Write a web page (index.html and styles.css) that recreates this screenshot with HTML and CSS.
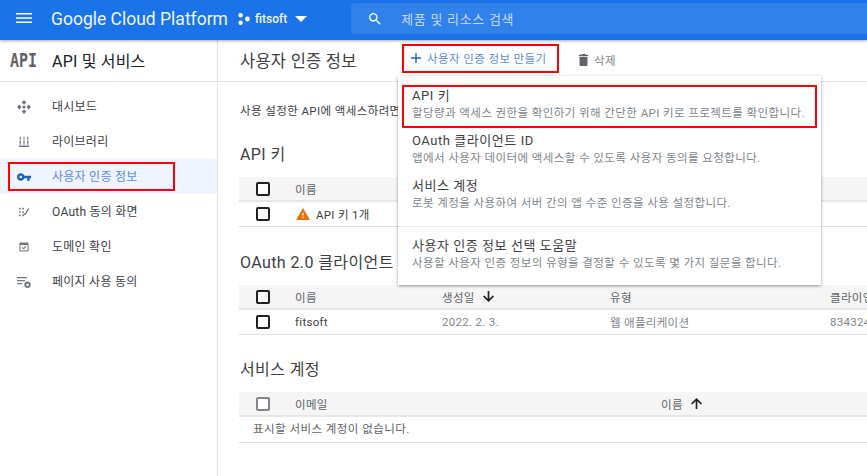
FILE: index.html
```html
<!DOCTYPE html>
<html lang="ko">
<head>
<meta charset="utf-8">
<title>사용자 인증 정보</title>
<link rel="stylesheet" href="styles.css">
</head>
<body>
<header class="topbar">
  <svg class="menu-icon" viewBox="0 0 16 10"><path d="M0 0h16v1.6H0zM0 4.2h16v1.6H0zM0 8.4h16V10H0z"/></svg>
  <span class="brand">Google Cloud Platform</span>
  <div class="project">
    <svg class="project-dots" viewBox="0 0 12 12"><circle cx="2.6" cy="2.2" r="2.2"/><circle cx="2.6" cy="9.8" r="2.2"/><circle cx="9.4" cy="6" r="2.4"/></svg>
    <span class="project-name">fitsoft</span>
    <svg class="caret" viewBox="0 0 12 6"><path d="M0 0h12L6 6z"/></svg>
  </div>
  <div class="search">
    <svg class="search-icon" viewBox="3 3 18 18"><path d="M15.5 14h-.79l-.28-.27A6.471 6.471 0 0 0 16 9.5 6.5 6.5 0 1 0 9.5 16c1.61 0 3.09-.59 4.23-1.57l.27.28v.79l5 4.99L20.49 19l-4.99-5zm-6 0C7.01 14 5 11.99 5 9.5S7.01 5 9.5 5 14 7.01 14 9.5 11.99 14 9.5 14z"/></svg>
    <span class="search-text">제품 및 리소스 검색</span>
  </div>
</header>

<div class="shell">
  <nav class="sidenav">
    <div class="side-head">
      <span class="api-logo">API</span>
      <span class="side-title">API 및 서비스</span>
    </div>
    <ul class="side-list">
      <li class="side-item">
        <svg class="side-icon" viewBox="0 0 14 14"><path d="M7 0l2.400 2.400L7 4.400 4.600 2.400zM7 9.600l2.400 2L7 14l-2.400-2.400zM2.400 4.600l2 2.400-2 2.400L0 7zM11.600 4.600L14 7l-2.400 2.400-2-2.400z"/><circle cx="7" cy="7" r="1.600"/></svg>
        <span>대시보드</span>
      </li>
      <li class="side-item">
        <svg class="side-icon" viewBox="-1 -1 16 16"><path d="M2 1h1.400v3H2zM6.300 1h1.400v3H6.300zM10.600 1h1.400v3h-1.400zM2 5h1.400v5H2zM6.300 5h1.400v5H6.300zM10.600 5h1.400v5h-1.400zM1 11h12v1.600H1z"/></svg>
        <span>라이브러리</span>
      </li>
      <li class="side-item is-active">
        <svg class="side-icon" viewBox="1 6 22 12"><path d="M12.65 10C11.83 7.67 9.61 6 7 6c-3.31 0-6 2.69-6 6s2.69 6 6 6c2.61 0 4.83-1.67 5.65-4H17v4h4v-4h2v-4H12.65zM7 14c-1.1 0-2-.9-2-2s.9-2 2-2 2 .9 2 2-.9 2-2 2z"/></svg>
        <span>사용자 인증 정보</span>
        <i class="mark mark-side"></i>
      </li>
      <li class="side-item">
        <svg class="side-icon" viewBox="-3 -3 20 20"><path d="M0 1h2.400v2.400H0zM4.500 1h2.400v2.400H4.500zM0 5.800h2.400v2.400H0zM4.500 5.800h2.400v2.400H4.500zM0 10.600h2.400V13H0zM4.500 10.600h2.400V13H4.500zM8 9.500l5-8 1.500 1-6 9.500-2.500-2 1-1.300z"/></svg>
        <span>OAuth 동의 화면</span>
      </li>
      <li class="side-item">
        <svg class="side-icon" viewBox="-3 -3 20 20"><path fill-rule="evenodd" d="M2 .5h10a1.500 1.500 0 0 1 1.500 1.500v10a1.500 1.500 0 0 1-1.500 1.500H2A1.500 1.500 0 0 1 .5 12V2A1.500 1.500 0 0 1 2 .5zM2 4v8h10V4z"/><path d="M3.800 8l1-1 1.500 1.500 3-3 1 1-4 4z"/></svg>
        <span>도메인 확인</span>
      </li>
      <li class="side-item">
        <svg class="side-icon" viewBox="0 0 14 14"><path d="M0 2h10v1.200H0zM0 5h8v1.200H0zM0 8h5v1.200H0z"/><circle cx="10.500" cy="9.800" r="2.300" fill="none" stroke="currentColor" stroke-width="1.800"/></svg>
        <span>페이지 사용 동의</span>
      </li>
    </ul>
  </nav>

  <main class="content">
    <div class="page-head">
      <h1 class="page-title">사용자 인증 정보</h1>
      <button class="action action-create">
        <svg class="plus" viewBox="0 0 10 10"><path d="M4.300 0h1.400v4.300H10v1.400H5.700V10H4.300V5.700H0V4.300h4.300z"/></svg>
        사용자 인증 정보 만들기
      </button>
      <button class="action action-delete">
        <svg class="trash" viewBox="5 3 14 18"><path d="M6 19c0 1.100.9 2 2 2h8c1.100 0 2-.9 2-2V7H6v12zM19 4h-3.500l-1-1h-5l-1 1H5v2h14V4z"/></svg>
        삭제
      </button>
      <div class="menu">
        <div class="menu-group">
          <div class="menu-item menu-item-marked">
            <div class="menu-name">API 키</div>
            <div class="menu-desc">할당량과 액세스 권한을 확인하기 위해 간단한 API 키로 프로젝트를 확인합니다.</div>
          </div>
          <div class="menu-item">
            <div class="menu-name">OAuth 클라이언트 ID</div>
            <div class="menu-desc">앱에서 사용자 데이터에 액세스할 수 있도록 사용자 동의를 요청합니다.</div>
          </div>
          <div class="menu-item">
            <div class="menu-name">서비스 계정</div>
            <div class="menu-desc">로봇 계정을 사용하여 서버 간의 앱 수준 인증을 사용 설정합니다.</div>
          </div>
        </div>
        <div class="menu-group menu-group-help">
          <div class="menu-item">
            <div class="menu-name">사용자 인증 정보 선택 도움말</div>
            <div class="menu-desc">사용할 사용자 인증 정보의 유형을 결정할 수 있도록 몇 가지 질문을 합니다.</div>
          </div>
        </div>
      </div>
    </div>

    <p class="intro">사용 설정한 API에 액세스하려면</p>

    <section class="block block-keys">
      <h2 class="block-title">API 키</h2>
      <div class="row row-head cols-keys">
        <span class="check"></span><span>이름</span>
      </div>
      <div class="row cols-keys">
        <span class="check"></span>
        <span class="key-name">
          <svg class="warn" viewBox="1 2 22 19"><path d="M1 21h22L12 2 1 21zm12-3h-2v-2h2v2zm0-4h-2v-4h2v4z"/></svg>
          API 키 1개
        </span>
      </div>
    </section>

    <section class="block block-oauth">
      <h2 class="block-title">OAuth 2.0 클라이언트 ID</h2>
      <div class="row row-head cols-oauth">
        <span class="check"></span><span>이름</span>
        <span class="sort">생성일
          <svg class="arrow" viewBox="0 0 12 12"><path d="M5.100 0h1.800v8.500L10.700 4.800 12 6l-6 6-6-6 1.300-1.200 3.800 3.700z"/></svg>
        </span>
        <span>유형</span><span>클라이언트 ID</span>
      </div>
      <div class="row cols-oauth">
        <span class="check"></span><span>fitsoft</span>
        <span class="muted">2022. 2. 3.</span>
        <span class="muted">웹 애플리케이션</span>
        <span class="muted">834324076</span>
      </div>
    </section>

    <section class="block block-service">
      <h2 class="block-title">서비스 계정</h2>
      <div class="row row-head cols-service">
        <span class="check check-dim"></span><span>이메일</span>
        <span class="sort">이름
          <svg class="arrow" viewBox="0 0 12 12"><path d="M5.100 12h1.800V3.500L10.700 7.200 12 6 6 0 0 6l1.300 1.200 3.800-3.700z"/></svg>
        </span>
      </div>
      <div class="row row-empty">표시할 서비스 계정이 없습니다.</div>
    </section>
  </main>
</div>
</body>
</html>
```

FILE: styles.css
```css
* { box-sizing: border-box; }
html, body { height: 100%; }
body {
  margin: 0;
  overflow: hidden;
  background: #fff;
  color: #3c4043;
  font-family: Roboto, "Noto Sans CJK KR", sans-serif;
  font-size: 11px;
}

/* top bar */
.topbar {
  position: relative;
  z-index: 3;
  display: flex;
  align-items: center;
  height: 40px;
  padding-left: 16px;
  background: #1a73e8;
  color: #fff;
  box-shadow: 0 1px 3px rgba(0,0,0,.35);
}
.menu-icon { width: 16px; height: 10px; margin-top: -4px; fill: #fff; }
.brand { margin-left: 19px; font-size: 17.500px; white-space: nowrap; color: #f1f6fe; margin-top: -2px; }
.project { display: flex; align-items: center; margin-left: 10px; margin-top: -2px; }
.project-dots { width: 12px; height: 12px; fill: #fff; }
.project-name { margin-left: 5px; font-size: 12px; font-weight: 500; color: #f1f6fe; }
.caret { width: 12px; height: 6px; margin-left: 8px; fill: #fff; }
.search {
  display: flex;
  align-items: center;
  flex: 1;
  height: 31px;
  margin-left: 44px;
  margin-top: -3px;
  padding-left: 18px;
  border-radius: 4px 0 0 4px;
  background: #3181ea;
}
.search-icon { width: 12px; height: 12px; fill: #fff; }
.search-text { margin-left: 20px; font-size: 13px; letter-spacing: .7px; color: #c5dafa; }

/* frame */
.shell { display: flex; height: 436px; }

/* side */
.sidenav { flex: none; width: 218px; border-right: 1px solid #e0e0e0; }
.side-head {
  display: flex;
  align-items: center;
  height: 42px;
  padding-left: 10px;
  border-bottom: 1px solid #e4e4e4;
}
.api-logo {
  display: inline-block;
  width: 42px;
  font-family: "DejaVu Sans Mono", monospace;
  font-size: 15px;
  font-weight: 700;
  color: #5f6368;
  transform: scaleY(1.3);
  transform-origin: 50% 55%;
}
.side-title { font-size: 16px; letter-spacing: .2px; color: #202124; margin-bottom: 2px; }
.side-list { margin: 0; padding: 7px 0 0; list-style: none; }
.side-item {
  position: relative;
  display: flex;
  align-items: center;
  height: 35px;
  padding-left: 17px;
  font-size: 12px;
  letter-spacing: .25px;
  color: #3c4043;
}
.side-item span { margin-left: 21px; margin-bottom: 3px; }
.side-icon { flex: none; width: 14px; height: 14px; fill: currentColor; color: #70757a; }
.is-active { background: #eef3fd; color: #5a8fe8; }
.is-active .side-icon { color: #1a63c8; height: 8px; }
.mark { position: absolute; border: 2px solid #f00; pointer-events: none; }
.mark-side { left: 8px; top: 3px; width: 167px; height: 29px; }

/* main */
.content { flex: 1; min-width: 0; overflow: hidden; }
.page-head {
  position: relative;
  display: flex;
  align-items: center;
  height: 42px;
  padding-left: 22px;
  border-bottom: 1px solid #e4e4e4;
}
.page-title { width: 162px; margin: 0 0 2px; font-size: 16.500px; letter-spacing: .25px; font-weight: 400; color: #3c4043; white-space: nowrap; }
.action {
  display: flex;
  align-items: center;
  height: 29px;
  padding: 0;
  border: 0;
  background: none;
  font: inherit;
  font-size: 11.500px;
  letter-spacing: .4px;
}
.action-create {
  width: 157px;
  margin-bottom: 5px;
  padding-left: 7px;
  border: 2px solid #f00;
  color: #5d8ed8;
}
.plus { width: 10px; height: 10px; margin-right: 6px; fill: #1a63c8; }
.action-delete { margin-left: 19px; margin-bottom: 2px; color: #80868b; }
.trash { width: 11px; height: 12px; margin-right: 5px; fill: #5f6368; }

/* popup */
.menu {
  position: absolute;
  z-index: 2;
  left: 180px;
  top: 36px;
  width: 423px;
  padding-top: 9px;
  background: #fff;
  box-shadow: 0 1px 3px rgba(0,0,0,.4);
}
.menu-item { height: 45px; padding: 4px 14px 0; }
.menu-item-marked { width: 415px; height: 43px; margin-left: 4px; padding: 0 8px; border: 2px solid #f00; }
.menu-name { margin-bottom: 1px; font-size: 13px; line-height: 18px; letter-spacing: .55px; color: #3c4043; white-space: nowrap; }
.menu-desc { font-size: 11.500px; line-height: 15px; letter-spacing: .42px; color: #80868b; white-space: nowrap; }
.menu-group-help { margin-top: 8px; padding: 6px 0 7px; border-top: 1px solid #ececec; }

/* sections */
.intro { margin: 22px 0 0 22px; font-size: 11.500px; line-height: 14px; letter-spacing: .4px; white-space: nowrap; color: #3c4043; }
.block { margin-left: 21px; }
.block-keys { margin-top: 27px; }
.block-oauth { margin-top: 26px; }
.block-service { margin-top: 25px; }
.block-title { margin: 0 0 12px 1px; font-size: 16px; line-height: 20px; letter-spacing: .4px; font-weight: 400; color: #3c4043; white-space: nowrap; }
.row {
  display: grid;
  align-items: center;
  width: 628px;
  height: 25px;
  border-bottom: 1px solid #e0e0e0;
  white-space: nowrap;
  font-size: 11.500px;
  letter-spacing: .3px;
}
.row-head { background: #f5f5f5; border-bottom: 2px solid #e6e6e6; color: #5f6368; }
.cols-keys { grid-template-columns: 56px 1fr; }
.cols-oauth { grid-template-columns: 56px 147px 168px 220px 1fr; }
.cols-service { grid-template-columns: 56px 366px 1fr; }
.check {
  width: 14px;
  height: 14px;
  margin-left: 17px;
  border: 2px solid #202124;
  border-radius: 2px;
  background: #fff;
}
.check-dim { border-color: #80868b; }
.key-name { display: flex; align-items: center; }
.warn { width: 14px; height: 12px; margin-right: 6px; margin-left: 1px; fill: #e8710a; }
.sort { display: flex; align-items: center; color: #5f6368; }
.arrow { width: 11px; height: 11px; margin-left: 8px; fill: #202124; }
.muted { color: #80868b; }
.row-empty { display: block; height: 26px; padding-left: 14px; line-height: 24px; letter-spacing: .45px; color: #5f6368; }
```
